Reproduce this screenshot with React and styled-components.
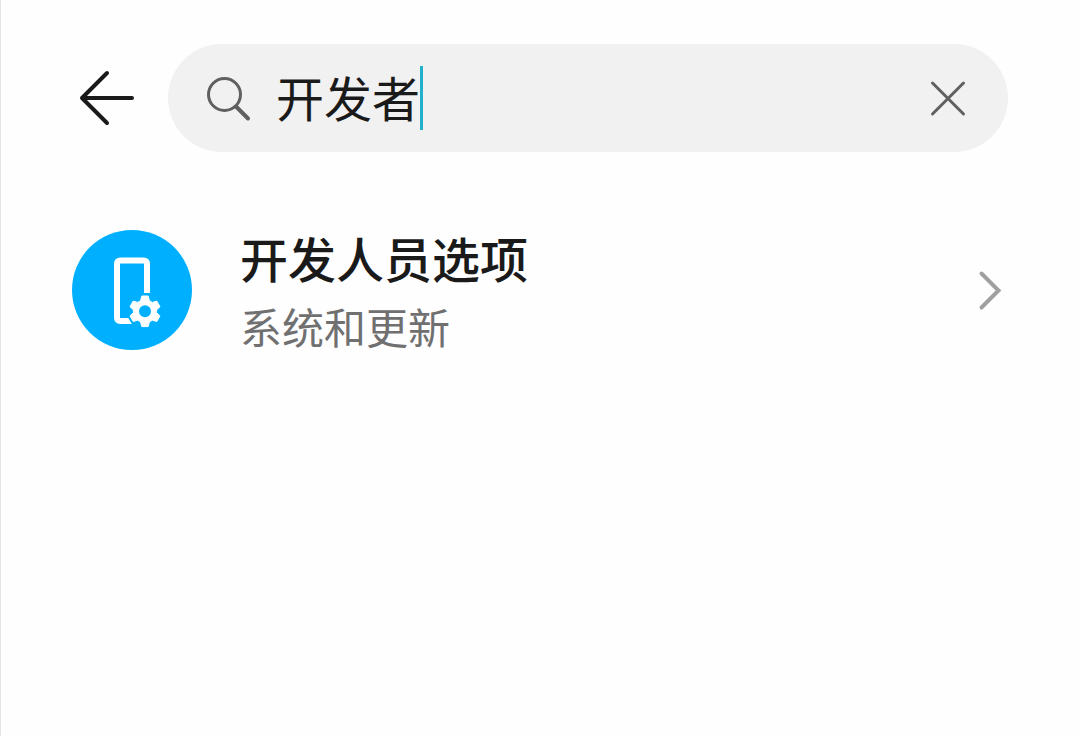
import React, { useState } from "react";
import styled, { createGlobalStyle } from "styled-components";

const GlobalStyle = createGlobalStyle`
  *, *::before, *::after { box-sizing: border-box; }
  body {
    margin: 0;
    background: #fefefe;
    font-family: "Noto Sans CJK SC", "Noto Sans", sans-serif;
    color: #1a1a1a;
  }
`;

const Page = styled.main`
  min-height: 100vh;
  padding: 44px 72px 44px 71px;
  border-left: 1px solid #e4e4e4;
`;

const Header = styled.header`
  display: flex;
  align-items: center;
  gap: 28px;
`;

const IconButton = styled.button`
  display: flex;
  flex: none;
  align-items: center;
  justify-content: center;
  width: ${({ $size }) => $size}px;
  height: ${({ $size }) => $size}px;
  padding: 0;
  border: 0;
  background: none;
  color: ${({ $color }) => $color};
  cursor: pointer;
`;

const SearchBar = styled.div`
  display: flex;
  flex: 1;
  align-items: center;
  min-width: 0;
  height: 108px;
  padding: 0 36px;
  border-radius: 54px;
  background: #f1f1f1;
  color: #606060;
`;

const Field = styled.label`
  display: flex;
  flex: 1;
  align-items: center;
  min-width: 0;
  cursor: text;

  > svg { flex: none; margin-right: 24px; }
`;

const SearchInput = styled.input`
  field-sizing: content;
  min-width: 1px;
  max-width: 100%;
  height: 72px;
  padding: 0 0 4px;
  border: 0;
  outline: 0;
  background: none;
  color: #1a1a1a;
  caret-color: transparent;
  font: 400 48px/68px "Noto Sans CJK SC", "Noto Sans", sans-serif;
`;

const Caret = styled.span`
  flex: none;
  width: 3px;
  height: 64px;
  background: #22b1c9;
`;

const Results = styled.ul`
  margin: 69px 0 0;
  padding: 0;
  list-style: none;
`;

const ResultLink = styled.a`
  display: flex;
  align-items: center;
  color: inherit;
  text-decoration: none;
`;

const Badge = styled.span`
  display: flex;
  flex: none;
  width: 120px;
  height: 120px;
  margin-right: 48px;
  border-radius: 50%;
  background: #00b0ff;
`;

const ResultText = styled.span`
  display: flex;
  flex: 1;
  flex-direction: column;
  min-width: 0;
`;

const Title = styled.span`
  font-size: 48px;
  font-weight: 500;
  line-height: 72px;
`;

const Subtitle = styled.span`
  color: #707070;
  font-size: 42px;
  line-height: 66px;
`;

const BackIcon = () => (
  <svg width="68" height="68" viewBox="0 0 68 68" fill="none" stroke="currentColor" strokeWidth="4" strokeLinecap="round" strokeLinejoin="round" aria-hidden="true">
    <path d="M60 34H10M35 9L10 34l25 25" />
  </svg>
);

const SearchIcon = () => (
  <svg width="48" height="48" viewBox="0 0 48 48" fill="none" stroke="currentColor" strokeWidth="3" aria-hidden="true">
    <circle cx="20.500" cy="20.500" r="16" />
    <path d="M32 32.500L44 44.500" strokeWidth="4" strokeLinecap="round" />
  </svg>
);

const ClearIcon = () => (
  <svg width="48" height="48" viewBox="0 0 48 48" fill="none" stroke="currentColor" strokeWidth="3" strokeLinecap="round" aria-hidden="true">
    <path d="M8.500 9l31 31M39.500 9l-31 31" />
  </svg>
);

const PhoneGearIcon = () => (
  <svg width="120" height="120" viewBox="0 0 120 120" aria-hidden="true">
    <path
      d="M75 63V34Q75 30.500 71.500 30.500H48.500Q45 30.500 45 34V87.500Q45 91 48.500 91H62"
      fill="none"
      stroke="#fff"
      strokeWidth="6"
    />
    <path d="M54 84L61 96H68V84Z" fill="#00b0ff" />
    <path
      d="M69.800 66H76.200L77.400 70.700L80.400 72.400L84.800 71.100L88 76.700L84.600 79.900V82.700L88 85.900L84.800 91.500L80.400 90.200L77.400 91.900L76.200 96.600H69.800L68.600 91.900L65.600 90.200L61.200 91.500L58 85.900L61.400 82.700V79.900L58 76.700L61.200 71.100L65.600 72.400L68.600 70.700Z"
      fill="#fff"
      stroke="#fff"
      strokeLinejoin="round"
    />
    <circle cx="73" cy="81.300" r="6" fill="#00b0ff" />
  </svg>
);

const ChevronIcon = () => (
  <svg width="36" height="48" viewBox="0 0 36 48" fill="none" stroke="#a0a0a0" strokeWidth="4" strokeLinecap="round" aria-hidden="true">
    <path d="M9.500 7.500l17 17-17 17" />
  </svg>
);

const results = [{ title: "开发人员选项", subtitle: "系统和更新" }];

export default function App() {
  const [query, setQuery] = useState("开发者");

  return (
    <>
      <GlobalStyle />
      <Page>
        <Header>
          <IconButton type="button" aria-label="返回" $size={68} $color="#1a1a1a">
            <BackIcon />
          </IconButton>
          <SearchBar role="search">
            <Field>
              <SearchIcon />
              <SearchInput
                type="text"
                aria-label="搜索"
                value={query}
                onChange={(event) => setQuery(event.target.value)}
              />
              <Caret />
            </Field>
            <IconButton type="button" aria-label="清除" $size={48} $color="#606060" onClick={() => setQuery("")}>
              <ClearIcon />
            </IconButton>
          </SearchBar>
        </Header>
        <Results>
          {results.map(({ title, subtitle }) => (
            <li key={title}>
              <ResultLink href="#developer-options">
                <Badge>
                  <PhoneGearIcon />
                </Badge>
                <ResultText>
                  <Title>{title}</Title>
                  <Subtitle>{subtitle}</Subtitle>
                </ResultText>
                <ChevronIcon />
              </ResultLink>
            </li>
          ))}
        </Results>
      </Page>
    </>
  );
}
